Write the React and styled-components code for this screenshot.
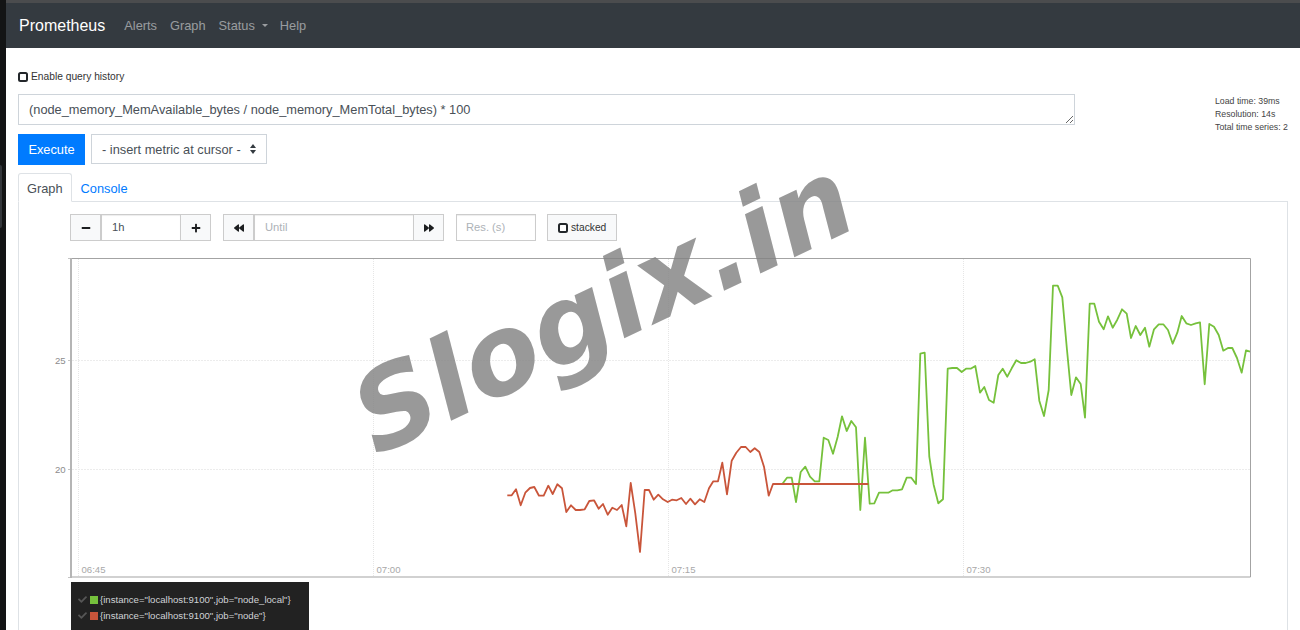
import React from "react";
import styled, { createGlobalStyle } from "styled-components";
import { FaMinus, FaPlus, FaBackward, FaForward, FaCheck } from "react-icons/fa";

const Global = createGlobalStyle`
  html, body { margin: 0; padding: 0; height: 630px; overflow: hidden; background: #fff; }
  body { font-family: "Liberation Sans", Arial, sans-serif; color: #212529; }
  #root { height: 630px; }
`;

const Page = styled.div`
  position: relative; display: flex; height: 630px; overflow: hidden;
`;
const Edge = styled.aside`
  width: 6px; flex: none; background: #131415; display: flex; flex-direction: column; padding-top: 165px; box-sizing: border-box;
`;
const EdgeHandle = styled.div`
  width: 2px; height: 63px; background: #33363a; border-radius: 0 2px 2px 0;
`;
const Main = styled.main`
  flex: 1; min-width: 0; display: flex; flex-direction: column;
`;
const Navbar = styled.nav`
  height: 45px; border-top: 3px solid #4b4c4e; background: #343a40; display: flex; align-items: center; padding-left: 13px; flex: none;
`;
const Brand = styled.span`
  color: #fff; font-size: 16px; margin-right: 19px;
`;
const NavLink = styled.span`
  color: rgba(255,255,255,.5); font-size: 12.8px; margin-right: 13px; display: inline-flex; align-items: center;
`;
const Caret = styled.i`
  display: inline-block; margin: 0 -1px 0 7px; border-top: 3.5px solid currentColor; border-left: 3.5px solid transparent; border-right: 3.5px solid transparent;
`;
const Body = styled.div`
  flex: 1; min-height: 0; padding: 22px 12px 0; display: flex; flex-direction: column;
`;
const TopRow = styled.div`
  display: flex; justify-content: space-between; align-items: flex-start; height: 64px; flex: none;
`;
const QueryCol = styled.div`
  width: 1057px; display: flex; flex-direction: column;
`;
const HistoryLabel = styled.label`
  display: flex; align-items: center; gap: 3px; font-size: 10.24px; color: #333; height: 13px; margin-bottom: 11px;
`;
const Box = styled.i`
  display: inline-block; width: 6px; height: 6px; border: 2px solid #23272b; border-radius: 2.5px; background: #fff; flex: none;
`;
const Query = styled.textarea`
  display: block; box-sizing: border-box; width: 1057px; height: 31px; margin: 0; padding: 7px 10px 5px; border: 1px solid #ced4da; font: 12.8px "Liberation Sans", Arial, sans-serif; color: #495057; outline: none; border-radius: 0; resize: both;
`;
const Stats = styled.div`
  margin-top: 25px; font-size: 8.75px; line-height: 13px; color: #444; width: 73px; white-space: nowrap;
`;
const ExecRow = styled.div`
  display: flex; gap: 6px; margin-bottom: 8px; flex: none; align-items: flex-start;
`;
const Execute = styled.button`
  width: 67px; height: 31px; border: 0; background: #007bff; color: #fff; font: 12.8px "Liberation Sans", Arial, sans-serif; padding: 0; border-radius: 0;
`;
const MetricSelect = styled.div`
  box-sizing: border-box; width: 176px; height: 30px; border: 1px solid #ced4da; color: #495057; font-size: 12.8px; display: flex; align-items: center; justify-content: space-between; padding: 0 10px;
`;
const Tabs = styled.div`
  display: flex; height: 29px; flex: none; border-bottom: 1px solid #dee2e6; box-sizing: border-box; width: 1270px;
`;
const Tab = styled.div`
  box-sizing: border-box; height: 29px; padding: 7px 8px 0; font-size: 12.8px; line-height: 15px;
  color: ${p => (p.$active ? "#495057" : "#007bff")};
  background: ${p => (p.$active ? "#fff" : "transparent")};
  border: 1px solid ${p => (p.$active ? "#dee2e6" : "transparent")};
  border-bottom-color: ${p => (p.$active ? "#fff" : "transparent")};
  border-radius: 3px 3px 0 0;
`;
const Pane = styled.section`
  flex: 1; width: 1270px; box-sizing: border-box; border: 1px solid #dee2e6; border-top: 0; padding: 12px 0 0 51px; display: flex; flex-direction: column;
`;
const Controls = styled.div`
  display: flex; gap: 12px; height: 27px; flex: none;
`;
const Group = styled.div`
  display: flex; height: 27px; box-sizing: border-box;
`;
const IconBtn = styled.button`
  box-sizing: border-box; width: 31px; height: 27px; padding: 0; border: 1px solid #ccc; background: #f8f9fa; color: #1c1e20; display: flex; align-items: center; justify-content: center; margin-left: ${p => (p.$join ? "-1px" : 0)}; font-size: 10px;
`;
const Field = styled.input`
  box-sizing: border-box; width: ${p => p.$w}px; height: 27px; margin: 0; padding: 0 ${p => p.$pad || 10}px 2px; border: 1px solid #ccc; font: 11.2px "Liberation Sans", Arial, sans-serif; color: #495057; outline: none; border-radius: 0; box-shadow: inset 0 1px 1px rgba(0,0,0,.075);
  &::placeholder { color: #adb2b7; opacity: 1; }
`;
const Stacked = styled.button`
  box-sizing: border-box; width: 70px; height: 27px; margin-left: -1px; padding: 0 0 0 10px; border: 1px solid #ccc; background: #f8f9fa; font: 10.24px "Liberation Sans", Arial, sans-serif; color: #333; display: flex; align-items: center; gap: 3px;
`;
const ChartSvg = styled.svg`
  display: block; flex: none; width: 1210px; height: 332px; margin: 9px 0 0 -20px;
`;
const Legend = styled.div`
  flex: none; width: 238px; height: 48px; margin-left: 1px; box-sizing: border-box; background: #222; padding: 10px 0 0 7px; display: flex; flex-direction: column; gap: 1px;
`;
const LegendRow = styled.div`
  display: flex; align-items: center; height: 15px; font-size: 9.6px; white-space: nowrap;
  color: #d0d3d6;
  svg { color: #565656; width: 9px; height: 9px; margin-right: 3px; flex: none; }
`;
const Swatch = styled.i`
  display: block; width: 8px; height: 8px; background: ${p => p.$c}; margin-right: 2px; flex: none;
`;
const Watermark = styled.div`
  position: absolute; left: 383px; top: 364px; transform-origin: 0 100%; transform: rotate(-25.5deg);
  font: italic bold 110px/106px "DejaVu Sans", sans-serif; color: rgba(130,130,130,.82); white-space: nowrap; pointer-events: none;
`;

const z = (pts, ox, oy) => pts.map(([x, y]) => `${(x / 3 + ox).toFixed(1)},${(y / 3 + oy).toFixed(1)}`).join(" ");

const red = z([[22,286],[35,286],[48,268],[62,316],[76,278],[90,264],[103,261],[117,287],[131,287],[145,257],[158,282],[172,253],[186,265],[199,336],[213,316],[227,330],[240,330],[254,328],[268,303],[282,301],[296,326],[309,312],[323,344],[337,323],[351,330],[365,315],[379,379],[392,249],[406,340],[420,456],[434,270],[447,270],[461,299],[475,284],[489,298],[503,306],[516,299],[530,301],[544,294],[558,312],[571,296],[585,313],[599,298],[613,306],[627,265],[640,244],[654,244],[667,188],[681,283],[695,182],[709,158],[723,141],[737,141],[751,156]], 500, 400)
  + " " + z([[14,325],[28,336],[42,380],[56,467],[69,432],[355,432]], 750, 340);
const green = z([[97,432],[111,413],[125,413],[138,486],[152,396],[166,380],[180,410],[194,424],[208,424],[221,293],[235,300],[249,341],[263,290],[276,229],[290,273],[304,243],[318,262],[331,510],[345,293],[359,491],[373,490],[387,458],[401,458],[415,458],[428,451],[442,451],[456,448],[470,413],[484,413],[498,432],[511,41],[524,38],[538,350],[551,435],[565,490],[579,478],[593,86],[607,84],[621,84],[635,96],[648,86],[662,86],[676,78],[690,158],[703,141],[717,180],[731,188],[745,105]], 750, 340)
  + " " + z([[8,296],[22,320],[35,295],[49,271],[63,279],[77,279],[91,275],[104,268],[118,392],[132,438],[146,360],[159,47],[173,47],[187,82],[201,240],[214,375],[228,322],[242,342],[255,443],[269,101],[283,101],[297,155],[311,178],[324,139],[338,173],[352,149],[366,118],[380,131],[393,204],[407,168],[421,195],[435,173],[448,230],[462,178],[476,163],[490,163],[504,180],[518,221],[532,188],[545,138],[559,160],[573,165],[587,160],[600,157],[614,343],[628,162],[642,170],[656,195],[670,242],[684,234],[697,234],[711,264],[725,308],[738,241],[750,245]], 1000, 270);

const times = [[78.5, "06:45"], [373.5, "07:00"], [668.5, "07:15"], [963.5, "07:30"]];
const vals = [[360.5, "25"], [469.5, "20"]];
const timeStyle = { font: '9.6px "Liberation Sans", Arial, sans-serif', fill: "#a8a8a8" };
const valStyle = { font: '9.6px "Liberation Sans", Arial, sans-serif', fill: "#8c8c8c" };

const Chart = () => (
  <ChartSvg viewBox="50 250 1210 332" aria-label="Graph">
    {times.map(([x]) => <line key={x} x1={x} x2={x} y1="259" y2="577" stroke="#e6e6e6" strokeDasharray="1 1" />)}
    {vals.map(([y]) => <line key={y} x1="72" x2="1251" y1={y} y2={y} stroke="#ececec" strokeDasharray="2 1" />)}
    {[258.5, 360.5, 469.5, 577.5].map(y => <line key={y} x1="68" x2="71" y1={y} y2={y} stroke="#c4c4c4" />)}
    <polyline points={green} fill="none" stroke="#76c13c" strokeWidth="1.8" strokeLinejoin="round" />
    <polyline points={red} fill="none" stroke="#c9553a" strokeWidth="1.8" strokeLinejoin="round" />
    <path d="M71.5 258.5H1250.5V577H71.5" fill="none" stroke="#a3a3a3" />
    <line x1="71" x2="71" y1="258" y2="578" stroke="#b5b5b5" strokeWidth="2" />
    {times.map(([x, t]) => <text key={t} x={x + 3} y="572.5" style={timeStyle}>{t}</text>)}
    {vals.map(([y, t]) => <text key={t} x="55" y={y + 3.5} style={valStyle}>{t}</text>)}
  </ChartSvg>
);

const Arrows = () => (
  <svg width="6" height="10" viewBox="0 0 6 10"><path d="M3 0l3 4H0zM3 10L0 6h6z" fill="#343a40" /></svg>
);

export default function App() {
  return (
    <Page>
      <Global />
      <Edge><EdgeHandle /></Edge>
      <Main>
        <Navbar>
          <Brand>Prometheus</Brand>
          <NavLink>Alerts</NavLink>
          <NavLink>Graph</NavLink>
          <NavLink>Status<Caret /></NavLink>
          <NavLink>Help</NavLink>
        </Navbar>
        <Body>
          <TopRow>
            <QueryCol>
              <HistoryLabel><Box />Enable query history</HistoryLabel>
              <Query readOnly value="(node_memory_MemAvailable_bytes / node_memory_MemTotal_bytes) * 100" />
            </QueryCol>
            <Stats>
              <div>Load time: 39ms</div>
              <div>Resolution: 14s</div>
              <div>Total time series: 2</div>
            </Stats>
          </TopRow>
          <ExecRow>
            <Execute>Execute</Execute>
            <MetricSelect>- insert metric at cursor - <Arrows /></MetricSelect>
          </ExecRow>
          <Tabs>
            <Tab $active>Graph</Tab>
            <Tab>Console</Tab>
          </Tabs>
          <Pane>
            <Controls>
              <Group>
                <IconBtn aria-label="Reduce"><FaMinus /></IconBtn>
                <Field $w={80} readOnly value="1h" />
                <IconBtn $join aria-label="Increase"><FaPlus /></IconBtn>
              </Group>
              <Group>
                <IconBtn aria-label="Back"><FaBackward /></IconBtn>
                <Field $w={160} placeholder="Until" />
                <IconBtn $join aria-label="Forward"><FaForward /></IconBtn>
              </Group>
              <Group>
                <Field $w={80} $pad={9} placeholder="Res. (s)" />
              </Group>
              <Stacked><Box />stacked</Stacked>
            </Controls>
            <Chart />
            <Legend>
              <LegendRow><FaCheck /><Swatch $c="#76c13c" />{'{instance="localhost:9100",job="node_local"}'}</LegendRow>
              <LegendRow><FaCheck /><Swatch $c="#c9553a" />{'{instance="localhost:9100",job="node"}'}</LegendRow>
            </Legend>
          </Pane>
        </Body>
      </Main>
      <Watermark>Slogix.in</Watermark>
    </Page>
  );
}
